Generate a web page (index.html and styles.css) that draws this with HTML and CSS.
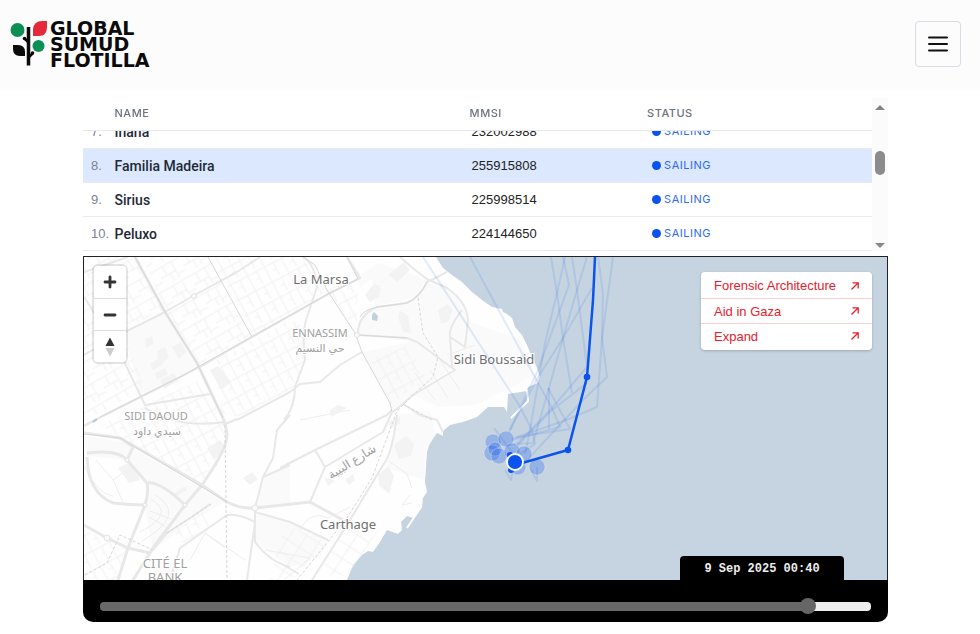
FILE: index.html
```html
<!DOCTYPE html>
<html lang="en">
<head>
<meta charset="utf-8">
<meta name="viewport" content="width=device-width, initial-scale=1">
<title>Global Sumud Flotilla</title>
<link rel="stylesheet" href="styles.css">
</head>
<body>
<header class="site-header">
  <a class="logo" href="#">
    <svg class="logo-mark" viewBox="0 0 38 48" aria-hidden="true">
      <circle cx="7.500" cy="10" r="7" fill="#0c8f55"/>
      <circle cx="28.500" cy="26" r="6" fill="#0c8f55"/>
      <path d="M23 16V9Q24 1 32 1h5v6q0 9-8 9z" fill="#e22a3a"/>
      <path d="M3 25h5q7 0 7 7v4h-5q-7 0-7-7z" fill="#0b0b0b"/>
      <path d="M18.500 7v38.500" stroke="#0b0b0b" stroke-width="3.500"/>
      <path d="M18 22l-4-4M19 37l4-4" stroke="#0b0b0b" stroke-width="2.500"/>
      <circle cx="14.500" cy="18.500" r="1.800" fill="#0b0b0b"/><circle cx="22.500" cy="33" r="1.800" fill="#0b0b0b"/>
    </svg>
    <span class="logo-text">GLOBAL<br>SUMUD<br>FLOTILLA</span>
  </a>
  <button class="menu-button" type="button" aria-label="Menu">
    <svg width="24" height="24" viewBox="0 0 24 24" aria-hidden="true"><path d="M3 5.500h18M3 12h18M3 18.500h18" stroke="#111" stroke-width="2" stroke-linecap="round"/></svg>
  </button>
</header>
<main class="tracker">
  <section class="fleet">
    <div class="fleet-scroll" id="fleet">
      <table>
        <thead><tr><th class="col-num"></th><th class="col-name">NAME</th><th class="col-mmsi">MMSI</th><th>STATUS</th></tr></thead>
        <tbody>
          <tr><td class="num">7.</td><td class="name">Inana</td><td class="mmsi">232002988</td><td><span class="status">SAILING</span></td></tr>
          <tr class="selected"><td class="num">8.</td><td class="name">Familia Madeira</td><td class="mmsi">255915808</td><td><span class="status">SAILING</span></td></tr>
          <tr><td class="num">9.</td><td class="name">Sirius</td><td class="mmsi">225998514</td><td><span class="status">SAILING</span></td></tr>
          <tr><td class="num">10.</td><td class="name">Peluxo</td><td class="mmsi">224144650</td><td><span class="status">SAILING</span></td></tr>
        </tbody>
      </table>
    </div>
    <div class="scrollbar" aria-hidden="true">
      <span class="arrow-up"></span><span class="thumb"></span><span class="arrow-down"></span>
    </div>
  </section>
  <section class="viewer">
    <div class="map">
      <svg class="map-canvas" viewBox="84 257 803 323" preserveAspectRatio="xMidYMid slice" role="img" aria-label="Map of Sidi Boussaid and Carthage">
        <defs>
          <pattern id="streets" width="26" height="22" patternUnits="userSpaceOnUse" patternTransform="rotate(-30)">
            <path d="M0 4h26M0 14h17M17 4v18M7 4v10M17 18h9M11 14v8" fill="none" stroke="#f1f1f1"/>
          </pattern>
          <pattern id="streets-fine" width="19" height="17" patternUnits="userSpaceOnUse" patternTransform="rotate(-28)">
            <path d="M0 3h19M4 3v14M0 10h4M13 0v17" fill="none" stroke="#f1f1f1"/>
          </pattern>
          <pattern id="streets-south" width="14" height="14" patternUnits="userSpaceOnUse" patternTransform="rotate(33)">
            <path d="M0 2h14M3 0v14" fill="none" stroke="#f1f1f1"/>
          </pattern>
        </defs>
        <rect x="84" y="257" width="803" height="323" fill="#c5d4e0"/>
        <path fill="#fefefe" d="M84 257H436L443 268L452 275L462 282L472 292L482 300L492 307L502 309L503 312L507 314L512 318L515 327L522 335L527 345L532 357L537 368L540 377L538 383L528 387L527 391L508 394L507 412L504 407L488 407L477 417L463 422L450 425L443 431V436L437 433L430 442L427 452L425 482L427 492L423 498L422 507L413 518L407 516L401 522L402 530L398 534L387 530L380 542L373 552L368 551L362 555L353 565L347 580H84Z"/>
        <g fill="#fafafa">
          <path d="M125 334L164 313L198 365L140 397Z"/>
          <path d="M84 436L120 441L225 502L190 522L153 550L145 508L147 484L127 460L87 456Z"/>
          <path d="M360 316L378 307L416 299L428 283L448 289L463 304L468 321L520 340L535 375L505 390L475 405L440 407L413 395L455 370L417 342L359 334Z"/>
          <path d="M372 278L360 288L358 277L378 263L427 279L413 298L375 306Z"/>
          <path d="M256 510L290 505V466L263 477ZM256 514L290 522L328 540L320 558L290 567L256 542Z"/>
          <path d="M400 414L430 411L436 434L426 450L424 480L386 468Z"/>
          <path d="M361 353L413 341L452 368L412 395L392 409Z"/>
        </g>
        <path fill="url(#streets)" d="M142 257H208L251 337L200 364L166 311ZM84 257H134L164 310L84 350ZM84 357L124 337L145 386L100 414L84 415Z"/>
        <path fill="url(#streets-fine)" d="M210 257H302L327 291L254 335ZM213 362L290 320L303 327L305 360L295 387L240 417L222 413ZM318 291L358 278L357 333L330 293ZM370 360L410 345L425 375L392 405Z"/>
        <path fill="url(#streets-fine)" d="M100 425L200 380L222 416L226 435L202 483L120 438ZM174 530L203 512L212 525L185 548ZM84 530L128 548L116 580H84Z"/>
        <path fill="url(#streets-south)" d="M347 520L374 537L347 576L318 575ZM285 525L328 542L290 580H270Z"/>
        <g fill="none" stroke="#eeeeee">
          <path d="M84 466Q98 495 113 496M96 460L113 480L132 466M113 480L123 502M155 495Q188 514 142 541M151 499Q176 514 140 532M150 511L171 519M149 517L165 526M300 530Q310 510 328 518L350 507M300 420L350 410M265 550L310 558L285 579M190 560L205 533L225 548M205 533L245 560"/>
          <path d="M440 360L460 390M430 370L448 398M447 355L475 345M415 373L435 400M390 462L407 474L412 488M410 495L402 505L412 503"/>
        </g>
        <g fill="#f3f3f3">
          <path d="M145 339l7-3 1 8-7 4zM157 351l8-4 4 10-9 9-7 4-3-6 8-5zM172 347l9-5 5 10-7 7zM210 370l8-4 13 16-10 8zM118 468l13-6 9 18-11 3zM243 478l9-6 6 7-8 6zM365 295l9-11 7 2-2 11-9 5zM388 275l16-13 6 8-13 12zM438 310l10-6 5 6-5 12-7 1zM394 445l12-9 8 8-3 12-12 3zM378 475l10-9 6 10-5 18-10-9zM330 410l8-5 9 3-16 9zM155 373l10-5 3 6-11 6zM388 422l12-6v8l-9 4zM160 380l14-7 4 8-14 8z"/>
          <path d="M207 448l13-8 6 8-12 12zM400 310l8 6 3 17-8-1-5-15zM173 494l12-8 2 4-10 6zM324 477l11 4-7 5zM345 480l8-6 2 6-6 5z"/>
        </g>
        <path d="M374 312l4 4-1 5-5-1v-5z" fill="#bfd0df"/>
        <g fill="none" stroke="#e8e8e8" stroke-width="3" stroke-linejoin="round">
          <path d="M135 257L165 312L197 363L223 418Q229 434 226 441Q224 453 202 485L185 505L153 548L133 580"/>
          <path d="M84 426L97 419L180 377L203 365L252 337L330 293L360 278L347 257" stroke-width="2.500"/>
          <path d="M87 453Q118 449 127 460L147 483Q149 492 145 505L128 548L118 580M87 457Q88 493 113 503Q130 505 145 505M84 525L107 538L128 548L150 553M147 483Q160 481 185 505M127 460L133 447L120 438"/>
          <path d="M84 433L120 438L202 485L227 502Q240 509 255 508L310 502L343 520"/>
          <path d="M392 412L383 432L325 467L310 502M315 450L325 467" stroke-width="2"/>
        </g>
        <g fill="none" stroke="#e8e8e8" stroke-width="2" stroke-linejoin="round">
          <path d="M84 355L123 333L165 312L193 296L237 272L260 257M84 272L128 257M84 297L120 353L145 405L210 394"/>
          <path d="M237 420L290 392L300 384L320 382L340 365L362 352M223 425L237 419M145 408Q180 429 224 422"/>
          <path d="M303 257Q315 264 317 287L306 320Q302 335 305 360L295 387Q295 407 284 420M290 415L277 430L273 458L263 477L255 508V542Q270 562 290 567M290 465L263 477M255 522Q238 513 227 515L180 548L170 580M255 522L247 580M255 512L290 522L328 540M210 504L190 518L167 533L153 550"/>
          <path d="M358 335L407 338L417 342L455 370L413 395L393 412M358 335Q357 316 377 307L407 303Q420 297 427 282L447 272M400 257L415 270L427 279L447 288Q467 302 468 320L465 347L450 337Q448 328 462 310M450 337L452 367"/>
          <path d="M280 468L315 450L387 415L392 410M397 415Q392 455 383 465L347 525L312 580M403 404L420 415L437 420L443 432M344 520L354 526M280 563L299 574"/>
        </g>
        <g fill="none" stroke="#d7d7d7">
          <path d="M100 417L180 377L330 293L358 279L347 257M208 257L252 337"/>
          <path d="M135 257L165 312L197 363L223 418M303 257L315 265L327 290L355 333L362 352L390 403L392 412M360 317Q362 311 377 307L407 303Q420 297 427 282M358 335L407 338"/>
          <path d="M84 434L120 438L227 502"/>
          <path stroke-dasharray="3 2" d="M225 425L227 580M85 575L107 563L120 535L153 550M167 533L213 503M418 298L423 333L438 357L433 377L413 395L397 411L372 478L347 518L297 580M403 404L432 420"/>
        </g>
        <g fill="#fafafa" stroke="#e3e3e3"><circle cx="194" cy="296" r="2.500"/><circle cx="127" cy="460" r="2"/><circle cx="145" cy="505" r="2"/><circle cx="107" cy="538" r="3"/><circle cx="185" cy="505" r="2"/><circle cx="255" cy="508" r="3"/><circle cx="357" cy="335" r="2.500"/></g>
        <path d="M527 390L528 401L511 418M421 507L407 528" fill="none" stroke="#fff" stroke-width="2"/>
        <path d="M93 422l4-3" stroke="#abc8df" stroke-width="2"/>

        <g class="place minor">
          <text x="320" y="337">ENNASSIM</text>
          <text x="320" y="352">حي النسيم</text>
          <text x="156" y="420">SIDI DAOUD</text>
          <text x="157" y="435">سيدي داود</text>
          <text class="large" x="165" y="568">CITÉ EL</text>
          <text class="large" x="165" y="582">BANK</text>
          <text class="street" x="354" y="465" transform="rotate(-32 354 465)">شارع البيبة</text>
        </g>
        <g class="place">
          <text x="321" y="284">La Marsa</text>
          <text x="494" y="364">Sidi Boussaid</text>
          <text x="348" y="529">Carthage</text>
        </g>

        <g fill="none" stroke="#2563eb" stroke-opacity=".13" stroke-width="2" stroke-linejoin="round">
          <path d="M423 257L519 405L532 430L535 444L520 454"/>
          <path d="M470 257L538 383L552 408L560 427L512 440"/>
          <path d="M551 257L557 293L563 338L572 393"/>
          <path d="M565 257L557 293L545 343L530 430L525 454"/>
          <path d="M563 257L569 285L538 370L509 432"/>
          <path d="M572 257L577 290L587 367L552 408L517 444"/>
          <path d="M587 257L577 290L563 338L549 388L533 443L512 444"/>
          <path d="M592 288L563 338L537 379L510 430"/>
          <path d="M598 257L603 293L602 338L597 407L569 419L512 439"/>
          <path d="M613 257L602 338L607 377L583 400L530 457"/>
          <path d="M587 383L552 410L517 446M548 388L570 429L517 437"/>
          <path d="M549 388V429M494 428L512 452M537 467V481L531 470M505 470L511 480L514 462"/>
        </g>
        <g fill="#2563eb" fill-opacity=".3" stroke="#fff" stroke-opacity=".3">
          <circle cx="493" cy="442" r="8"/><circle cx="506" cy="439" r="8"/><circle cx="492" cy="453" r="8"/><circle cx="495" cy="449" r="7"/><circle cx="499" cy="456" r="8"/><circle cx="512" cy="451" r="8"/><circle cx="524" cy="454" r="8"/><circle cx="537" cy="467" r="8"/><circle cx="518" cy="467" r="8"/>
        </g>
        <path d="M595 257L593 300L587 377L568 450L515 465" fill="none" stroke="#0b53ef" stroke-width="2.500"/>
        <g fill="#0b53ef"><circle cx="587" cy="377" r="3.300"/><circle cx="568" cy="450" r="3.300"/><circle cx="511" cy="470" r="3"/><circle cx="510" cy="455" r="3"/><circle cx="515" cy="462" r="8" stroke="#fff" stroke-width="1.800"/></g>
      </svg>
      <div class="map-controls">
        <button type="button" aria-label="Zoom in"><svg viewBox="0 0 20 20"><path d="M10 5v10M5 10h10" stroke="#333" stroke-width="2.800" stroke-linecap="round"/></svg></button>
        <button type="button" aria-label="Zoom out"><svg viewBox="0 0 20 20"><path d="M5 10h10" stroke="#333" stroke-width="2.800" stroke-linecap="round"/></svg></button>
        <button type="button" aria-label="Reset north"><svg viewBox="0 0 20 20"><path d="M5.500 9L10 0.500L14.500 9z" fill="#333"/><path d="M5.500 11L10 19.500L14.500 11z" fill="#ccc"/></svg></button>
      </div>
      <nav class="map-links">
        <a href="#">Forensic Architecture<svg viewBox="0 0 10 10"><path d="M1.500 8.500L8 2M2.500 1.800H8.200V7.500" fill="none" stroke="#e8202c" stroke-width="1.300"/></svg></a>
        <a href="#">Aid in Gaza<svg viewBox="0 0 10 10"><path d="M1.500 8.500L8 2M2.500 1.800H8.200V7.500" fill="none" stroke="#e8202c" stroke-width="1.300"/></svg></a>
        <a href="#">Expand<svg viewBox="0 0 10 10"><path d="M1.500 8.500L8 2M2.500 1.800H8.200V7.500" fill="none" stroke="#e8202c" stroke-width="1.300"/></svg></a>
      </nav>
      <label class="date" for="time">9 Sep 2025 00:40</label>
    </div>
    <div class="timeline"><input id="time" type="range" min="0" max="1000" value="927"></div>
  </section>
</main>
<script src="script.js"></script>
</body>
</html>
```
FILE: styles.css
```css
* { box-sizing: border-box; }
body {
  margin: 0;
  background: #fff;
  color: #1f2937;
  font-family: "Liberation Sans", sans-serif;
}
button { padding: 0; cursor: pointer; }

.site-header {
  display: flex;
  align-items: center;
  justify-content: space-between;
  height: 90px;
  padding: 0 19px 2px 10px;
  background: #fcfcfc;
}
.logo {
  display: flex;
  align-items: center;
  gap: 2px;
  color: #0b0b0b;
  text-decoration: none;
}
.logo-mark { width: 38px; height: 48px; }
.logo-text {
  font: 700 19px/16px "DejaVu Sans", sans-serif;
}
.menu-button {
  display: grid;
  place-items: center;
  width: 46px;
  height: 46px;
  border: 1px solid #d9dce3;
  border-radius: 4px;
  background: #fcfcfc;
}

.tracker { padding: 8px 92px 12px 83px; }
.fleet {
  display: flex;
  height: 153px;
  margin-bottom: 5px;
}
.fleet-scroll {
  flex: 1;
  overflow: hidden;
}
table {
  width: 100%;
  table-layout: fixed;
  border-collapse: separate;
  border-spacing: 0;
}
th {
  position: sticky;
  top: 0;
  height: 33px;
  padding: 0 0 2px;
  border-bottom: 1px solid #e5e7eb;
  background: #fff;
  color: #6b7280;
  font: 500 11px Inter, sans-serif;
  letter-spacing: 0.5px;
  text-align: left;
}
.col-num { width: 4%; }
.col-name { width: 45%; }
.col-mmsi { width: 22.5%; }
td {
  height: 34px;
  padding: 0;
  border-bottom: 1px solid #e8eaed;
  font-size: 13px;
}
.selected td { background: #dbe8fe; }
td.num { padding-left: 8px; color: #7b8494; }
.name { font: 500 14px Roboto, sans-serif; }
td.mmsi { padding-left: 2px; color: #222; }
.status {
  display: flex;
  align-items: center;
  gap: 3px;
  padding: 0 0 2px 5px;
  color: #2f6bf0;
  font: 11px Inter, sans-serif;
  letter-spacing: 0.5px;
}
.status::before {
  content: "";
  width: 9px;
  height: 9px;
  margin-top: 2px;
  border-radius: 50%;
  background: #0b53ef;
}
.scrollbar {
  display: flex;
  flex-direction: column;
  align-items: center;
  width: 16px;
  padding: 7px 0 3px;
  background: #fbfbfb;
}
.arrow-up, .arrow-down {
  border: 5px solid transparent;
}
.arrow-up { border-top: 0; border-bottom-color: #858585; }
.arrow-down { border-bottom: 0; border-top-color: #858585; }
.thumb {
  width: 10px;
  height: 24px;
  margin: 41px 0 auto;
  border-radius: 5px;
  background: #8b8b8b;
}

.viewer {
  overflow: hidden;
  border-radius: 0 0 10px 10px;
  background: #000;
}
.map {
  position: relative;
  border: 1px solid #222;
  border-bottom: 0;
}
.map-canvas {
  display: block;
  width: 100%;
  aspect-ratio: 803 / 323;
}
.place {
  fill: #6f6f6f;
  stroke: #fff;
  stroke-width: 2px;
  paint-order: stroke;
  font: 13px "Noto Sans", "DejaVu Sans", sans-serif;
  text-anchor: middle;
}
.place.minor {
  fill: #a0a0a0;
  font-size: 11px;
}
.place .large { font-size: 13px; }
.place .street { font-size: 12px; }
.map-controls {
  position: absolute;
  top: 9px;
  left: 10px;
  overflow: hidden;
  border-radius: 4px;
  background: #fff;
  box-shadow: 0 0 0 2px rgba(0, 0, 0, 0.1);
}
.map-controls button {
  display: grid;
  place-items: center;
  width: 32px;
  height: 32px;
  border: 0;
  background: #fff;
}
.map-controls button + button { border-top: 1px solid #ddd; }
.map-controls svg { width: 20px; height: 20px; }
.map-links {
  position: absolute;
  top: 15px;
  right: 15px;
  width: 171px;
  padding: 1px 0 2px;
  border-radius: 4px;
  background: #fff;
  box-shadow: 0 1px 3px rgba(0, 0, 0, 0.2);
}
.map-links a {
  display: flex;
  align-items: center;
  justify-content: space-between;
  height: 25px;
  padding: 0 12px 0 13px;
  color: #e8202c;
  font-size: 13px;
  text-decoration: none;
}
.map-links a + a { border-top: 1px solid #fbd0d3; }
.map-links svg { width: 10px; height: 10px; }
.date {
  position: absolute;
  right: 43px;
  bottom: 0;
  width: 164px;
  padding-top: 2px;
  border-radius: 4px 4px 0 0;
  background: #000;
  color: #eee;
  font: 700 12px/22px "Liberation Mono", monospace;
  text-align: center;
}
.timeline {
  display: flex;
  align-items: center;
  height: 42px;
  padding: 10px 17px 0;
}
.timeline input {
  flex: 1;
  height: 16px;
  margin: 0;
  appearance: none;
  background: transparent;
}
.timeline input::-webkit-slider-runnable-track {
  height: 9px;
  border-radius: 4px;
  background: linear-gradient(90deg, #696969 92%, #eee 92%);
}
.timeline input::-webkit-slider-thumb {
  width: 16px;
  height: 16px;
  margin-top: -4px;
  border-radius: 50%;
  appearance: none;
  background: #666;
}
```
FILE: script.js
```js
const fleet = document.getElementById("fleet");
fleet.scrollTop = fleet.scrollHeight;
```
